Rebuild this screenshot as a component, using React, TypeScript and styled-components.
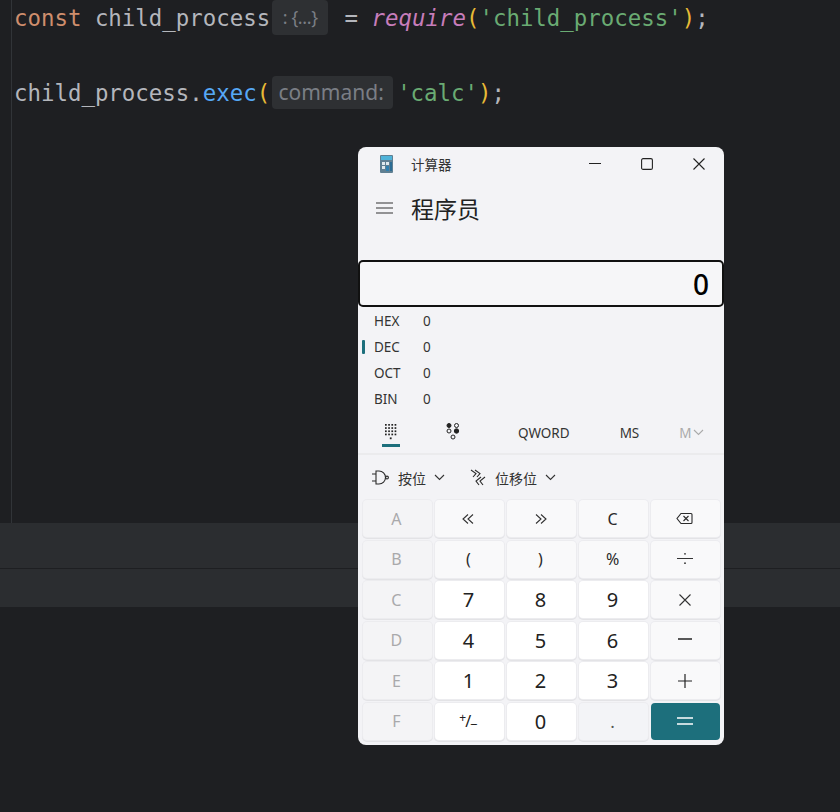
import styled, { createGlobalStyle } from "styled-components";

const GlobalStyle = createGlobalStyle`
  html, body {
    margin: 0;
    padding: 0;
    background: #1e1f22;
  }
  * {
    box-sizing: border-box;
  }
`;

const bases = [
  { label: "HEX", active: false },
  { label: "DEC", active: true },
  { label: "OCT", active: false },
  { label: "BIN", active: false },
];

type KeyKind = "hexKey" | "fn" | "digit" | "dot" | "equals";
type IconName = "backspace" | "shl" | "shr" | "div" | "mul" | "minus" | "plus" | "equals" | "sign";
type KeyDef = { label?: string; kind: KeyKind; icon?: IconName };

const keys: KeyDef[] = [
  { label: "A", kind: "hexKey" },
  { icon: "shl", kind: "fn" },
  { icon: "shr", kind: "fn" },
  { label: "C", kind: "fn" },
  { icon: "backspace", kind: "fn" },
  { label: "B", kind: "hexKey" },
  { label: "(", kind: "fn" },
  { label: ")", kind: "fn" },
  { label: "%", kind: "fn" },
  { icon: "div", kind: "fn" },
  { label: "C", kind: "hexKey" },
  { label: "7", kind: "digit" },
  { label: "8", kind: "digit" },
  { label: "9", kind: "digit" },
  { icon: "mul", kind: "fn" },
  { label: "D", kind: "hexKey" },
  { label: "4", kind: "digit" },
  { label: "5", kind: "digit" },
  { label: "6", kind: "digit" },
  { icon: "minus", kind: "fn" },
  { label: "E", kind: "hexKey" },
  { label: "1", kind: "digit" },
  { label: "2", kind: "digit" },
  { label: "3", kind: "digit" },
  { icon: "plus", kind: "fn" },
  { label: "F", kind: "hexKey" },
  { icon: "sign", kind: "digit" },
  { label: "0", kind: "digit" },
  { label: ".", kind: "dot" },
  { icon: "equals", kind: "equals" },
];

function KeyIcon({ name }: { name: IconName }) {
  if (name === "sign") {
    return (
      <SignLabel>
        <SignUp>+</SignUp>/<SignDown>−</SignDown>
      </SignLabel>
    );
  }
  if (name === "backspace") {
    return (
      <svg width="17" height="13" viewBox="0 0 17 13" fill="none" stroke="#2a2a2a" strokeWidth="1.1">
        <path d="M5 1.5h10a1 1 0 0 1 1 1v8a1 1 0 0 1-1 1H5L1 6.5z" />
        <path d="M7.5 4l5 5M12.5 4l-5 5" />
      </svg>
    );
  }
  if (name === "shl" || name === "shr") {
    const d = name === "shl" ? "M7 1.5L2 6l5 4.5M12 1.5L7 6l5 4.5" : "M2 1.5L7 6l-5 4.5M7 1.5L12 6l-5 4.5";
    return (
      <svg width="14" height="12" viewBox="0 0 14 12" fill="none" stroke="#333" strokeWidth="1.1">
        <path d={d} />
      </svg>
    );
  }
  if (name === "div") {
    return (
      <svg width="16" height="14" viewBox="0 0 16 14" stroke="#333" fill="#333" strokeWidth="1">
        <path d="M0 6.5h16" />
        <circle cx="8" cy="1.8" r="0.9" strokeWidth="0" />
        <circle cx="8" cy="11.2" r="0.9" strokeWidth="0" />
      </svg>
    );
  }
  if (name === "mul") {
    return (
      <svg width="12" height="12" viewBox="0 0 12 12" stroke="#333" strokeWidth="1.1">
        <path d="M0.5 0.5l11 11M11.5 0.5l-11 11" />
      </svg>
    );
  }
  if (name === "minus") {
    return (
      <Raised>
        <svg width="14" height="2" viewBox="0 0 14 2" stroke="#222" strokeWidth="1.3">
          <path d="M0 1h14" />
        </svg>
      </Raised>
    );
  }
  if (name === "plus") {
    return (
      <svg width="14" height="14" viewBox="0 0 14 14" stroke="#222" strokeWidth="1.2">
        <path d="M0 7h14M7 0v14" />
      </svg>
    );
  }
  return (
    <svg width="16" height="8" viewBox="0 0 16 8" stroke="#fff" strokeWidth="1.5">
      <path d="M0 1h16M0 7h16" />
    </svg>
  );
}

function CalcIcon() {
  return (
    <svg width="13" height="18" viewBox="0 0 13 18">
      <rect width="13" height="18" rx="1" fill="#5f7f92" />
      <rect x="1" y="1" width="11" height="4" fill="#4fb3d9" />
      <rect x="2" y="7" width="3" height="3" fill="#dfe9ee" />
      <rect x="6" y="7" width="3" height="3" fill="#dfe9ee" />
      <rect x="2" y="11" width="3" height="3" fill="#dfe9ee" />
      <rect x="6" y="11" width="3" height="5" fill="#2f80b0" />
      <rect x="10" y="7" width="2" height="9" fill="#2b6c94" />
    </svg>
  );
}

function Chevron({ color = "#333" }: { color?: string }) {
  return (
    <svg width="11" height="7" viewBox="0 0 11 7" fill="none" stroke={color} strokeWidth="1.1">
      <path d="M1 1l4.5 4.5L10 1" />
    </svg>
  );
}

function NumpadIcon() {
  const dots = [];
  for (let row = 0; row < 4; row++) {
    for (let col = 0; col < 4; col++) {
      dots.push(<rect key={`${row}-${col}`} x={col * 3.2} y={row * 3.2} width="1.7" height="1.7" />);
    }
  }
  return (
    <svg width="12" height="16" viewBox="0 0 12 16" fill="#222">
      {dots}
      <rect x="4.8" y="13.4" width="1.8" height="1.8" />
    </svg>
  );
}

function BitIcon() {
  return (
    <svg width="14" height="17" viewBox="0 0 14 17" stroke="#222" strokeWidth="1">
      <circle cx="3" cy="2.5" r="2" fill="#222" />
      <circle cx="3" cy="8" r="2" fill="none" />
      <circle cx="10.5" cy="8" r="2.2" fill="#222" />
      <circle cx="7" cy="14" r="2" fill="none" />
      <circle cx="10.5" cy="2.5" r="2" fill="none" />
    </svg>
  );
}

function GateIcon() {
  return (
    <svg width="19" height="17" viewBox="0 0 19 17" fill="none" stroke="#2a2a2a" strokeWidth="1.1">
      <path d="M5 2h3a6.5 6.5 0 0 1 0 13H5z" />
      <circle cx="16" cy="8.5" r="1.4" />
      <path d="M1 5h4M1 12h4" />
    </svg>
  );
}

function ShiftIcon() {
  return (
    <svg width="18" height="17" viewBox="0 0 18 17" fill="none" stroke="#2a2a2a" strokeWidth="1.1">
      <path d="M2 1l5 3.5L4 8M6 1l5 3.5L8 8" />
      <path d="M16 8l-5 4 3 4M12 8l-5 4 3 4" />
    </svg>
  );
}

export default function App() {
  return (
    <Page>
      <GlobalStyle />
      <Editor>
        <CodeLine>
          <Keyword>const</Keyword> child_process
          <ObjectHint>: {"{...}"}</ObjectHint>
          {" = "}
          <Call>require</Call>
          <Paren>(</Paren>
          <Str>'child_process'</Str>
          <Paren>)</Paren>;
        </CodeLine>
        <BlankLine />
        <CodeLine>
          child_process.<Method>exec</Method>
          <Paren>(</Paren>
          <CommandHint>command:</CommandHint>
          <Str>'calc'</Str>
          <Paren>)</Paren>;
        </CodeLine>
      </Editor>
      <PanelBar />
      <PanelBarLower />

      <CalcWindow>
        <TitleBar>
          <TitleLeft>
            <CalcIcon />
            <TitleText>计算器</TitleText>
          </TitleLeft>
          <WindowButtons>
            <svg width="12" height="12" viewBox="0 0 12 12" stroke="#222" strokeWidth="1.1">
              <path d="M0 5.5h12" />
            </svg>
            <svg width="12" height="12" viewBox="0 0 12 12" fill="none" stroke="#222" strokeWidth="1.1">
              <rect x="0.6" y="0.6" width="10.8" height="10.8" rx="1.5" />
            </svg>
            <svg width="12" height="12" viewBox="0 0 12 12" stroke="#222" strokeWidth="1.1">
              <path d="M0.5 0.5l11 11M11.5 0.5l-11 11" />
            </svg>
          </WindowButtons>
        </TitleBar>

        <ModeRow>
          <svg width="17" height="12" viewBox="0 0 17 12" stroke="#333" strokeWidth="1.2">
            <path d="M0 1h17M0 6h17M0 11h17" />
          </svg>
          <ModeTitle>程序员</ModeTitle>
        </ModeRow>

        <Display>0</Display>

        <BaseList>
          {bases.map((b) => (
            <BaseRow key={b.label} $active={b.active}>
              <BaseLabel>{b.label}</BaseLabel>
              <span>0</span>
            </BaseRow>
          ))}
        </BaseList>

        <TabRow>
          <KeypadTab $selected>
            <NumpadIcon />
          </KeypadTab>
          <KeypadTab>
            <BitIcon />
          </KeypadTab>
          <QwordLabel>QWORD</QwordLabel>
          <MsLabel>MS</MsLabel>
          <MemoryLabel>
            M
            <Chevron color="#aaa" />
          </MemoryLabel>
        </TabRow>

        <BitRow>
          <BitMenu>
            <GateIcon />
            <span>按位</span>
            <Chevron />
          </BitMenu>
          <BitMenu>
            <ShiftIcon />
            <span>位移位</span>
            <Chevron />
          </BitMenu>
        </BitRow>

        <Keypad>
          {keys.map((k, i) => (
            <Key key={i} $kind={k.kind}>
              {k.icon ? <KeyIcon name={k.icon} /> : k.label}
            </Key>
          ))}
        </Keypad>
      </CalcWindow>
    </Page>
  );
}

const Page = styled.div`
  position: relative;
  width: 840px;
  height: 812px;
  overflow: hidden;
  background: #1e1f22;
`;

const Editor = styled.div`
  height: 523px;
  margin-left: 11px;
  padding-left: 2px;
  border-left: 1px solid #313438;
`;

const CodeLine = styled.div`
  display: flex;
  align-items: center;
  height: 37px;
  font-family: "DejaVu Sans Mono", "Liberation Mono", monospace;
  font-size: 22.4px;
  line-height: 35px;
  color: #b4b6bc;
  white-space: pre;
`;

const BlankLine = styled.div`
  height: 38px;
`;

const Keyword = styled.span`
  color: #cf8e6d;
`;

const Call = styled.span`
  color: #c77dbb;
  font-style: italic;
`;

const Paren = styled.span`
  color: #e8ba36;
`;

const Str = styled.span`
  color: #6aab73;
`;

const Method = styled.span`
  color: #56a8f5;
`;

const ObjectHint = styled.span`
  display: flex;
  align-items: center;
  justify-content: center;
  width: 56px;
  height: 35px;
  margin: 0 3px 2px 2px;
  border-radius: 4px;
  background: #2e3033;
  color: #7a7e85;
  font-family: "Noto Sans", sans-serif;
  font-size: 18px;
  letter-spacing: -0.4px;
`;

const CommandHint = styled.span`
  display: flex;
  align-items: center;
  justify-content: center;
  width: 121px;
  height: 33px;
  margin: 0 4px 3px 2px;
  padding-right: 3px;
  border-radius: 4px;
  background: #2e3033;
  color: #7a7e85;
  font-family: "Noto Sans", sans-serif;
  font-size: 21px;
`;

const PanelBar = styled.div`
  height: 46px;
  background: #2b2d30;
  border-bottom: 1px solid #1e1f22;
`;

const PanelBarLower = styled.div`
  height: 38px;
  background: #2b2d30;
`;

const CalcWindow = styled.div`
  position: absolute;
  left: 358px;
  top: 147px;
  width: 366px;
  height: 598px;
  display: flex;
  flex-direction: column;
  border-radius: 8px;
  overflow: hidden;
  background: #f3f3f6;
  font-family: "Noto Sans", "Noto Sans CJK SC", sans-serif;
  color: #1c1c1c;
`;

const TitleBar = styled.div`
  display: flex;
  align-items: center;
  justify-content: space-between;
  height: 33px;
  padding: 0 19px 0 22px;
`;

const TitleLeft = styled.div`
  display: flex;
  align-items: center;
  gap: 18px;
`;

const TitleText = styled.span`
  font-family: "Noto Sans CJK SC", sans-serif;
  font-size: 13.5px;
  color: #333;
`;

const WindowButtons = styled.div`
  display: flex;
  align-items: center;
  gap: 40px;
`;

const ModeRow = styled.div`
  display: flex;
  align-items: center;
  gap: 18px;
  height: 55px;
  padding: 0 0 0 18px;
`;

const ModeTitle = styled.span`
  font-family: "Noto Sans CJK SC", sans-serif;
  font-size: 23px;
  color: #222;
`;

const Display = styled.div`
  display: flex;
  align-items: center;
  justify-content: flex-end;
  height: 47px;
  margin-top: 25px;
  padding: 0 13px 0 0;
  border: 2px solid #111;
  border-radius: 5px;
  background: #f6f6f8;
  font-size: 28px;
  font-weight: 500;
  color: #000;
`;

const BaseList = styled.div`
  display: flex;
  flex-direction: column;
  margin-top: 1px;
`;

const BaseRow = styled.div<{ $active: boolean }>`
  position: relative;
  display: flex;
  align-items: center;
  height: 26px;
  padding-left: 16px;
  font-size: 13.5px;
  color: #333;

  &::before {
    content: "";
    display: ${(p) => (p.$active ? "block" : "none")};
    position: absolute;
    left: 4px;
    top: 6px;
    width: 3px;
    height: 14px;
    border-radius: 1px;
    background: #1d6f7c;
  }
`;

const BaseLabel = styled.span`
  width: 49px;
`;

const TabRow = styled.div`
  display: flex;
  align-items: center;
  height: 43px;
  border-bottom: 2px solid #ebebed;
  font-size: 13.5px;
  color: #333;
`;

const KeypadTab = styled.div<{ $selected?: boolean }>`
  display: flex;
  justify-content: center;
  align-items: flex-start;
  width: 18px;
  height: 33px;
  margin: 0 0 4px ${(p) => (p.$selected ? "24px" : "44px")};
  padding-top: ${(p) => (p.$selected ? "10px" : "9px")};
  border-bottom: 3px solid ${(p) => (p.$selected ? "#1d6f7c" : "transparent")};
`;

const QwordLabel = styled.span`
  margin-left: 56px;
`;

const MsLabel = styled.span`
  margin-left: 50px;
`;

const MemoryLabel = styled.span`
  display: flex;
  align-items: center;
  gap: 1px;
  margin-left: 40px;
  color: #aaa;
`;

const BitRow = styled.div`
  display: flex;
  align-items: center;
  gap: 24px;
  height: 45px;
  padding-left: 13px;
  font-family: "Noto Sans CJK SC", sans-serif;
  font-size: 14px;
  color: #333;
`;

const BitMenu = styled.div`
  display: flex;
  align-items: center;
  gap: 8px;
`;

const Keypad = styled.div`
  display: grid;
  grid-template-columns: repeat(5, 1fr);
  grid-auto-rows: 37px;
  gap: 3.6px 3.4px;
  padding: 0 4px 0 5px;
`;

const keyColors: Record<KeyKind, { bg: string; fg: string; size: string }> = {
  hexKey: { bg: "#f4f4f6", fg: "#a9a9ab", size: "16px" },
  fn: { bg: "#f9f9fa", fg: "#2a2a2a", size: "16px" },
  digit: { bg: "#ffffff", fg: "#222", size: "20px" },
  dot: { bg: "#f3f4f7", fg: "#555", size: "17px" },
  equals: { bg: "#1d6f7c", fg: "#fff", size: "24px" },
};

const Key = styled.div<{ $kind: KeyKind }>`
  display: flex;
  align-items: center;
  justify-content: center;
  padding-right: 2px;
  border-radius: 4px;
  background: ${(p) => keyColors[p.$kind].bg};
  color: ${(p) => keyColors[p.$kind].fg};
  font-size: ${(p) => keyColors[p.$kind].size};
  box-shadow: ${(p) => (p.$kind === "equals" ? "none" : "0 0 0 1px #ececef, 0 1px 0 1px #e3e3e6")};
`;

const Raised = styled.span`
  display: flex;
  margin-bottom: 3px;
`;

const SignLabel = styled.span`
  display: flex;
  align-items: center;
  font-size: 16px;
  line-height: 1;
`;

const SignUp = styled.span`
  font-size: 12px;
  margin: -6px -1px 0 0;
`;

const SignDown = styled.span`
  font-size: 13px;
  margin: 6px 0 0 -1px;
`;
